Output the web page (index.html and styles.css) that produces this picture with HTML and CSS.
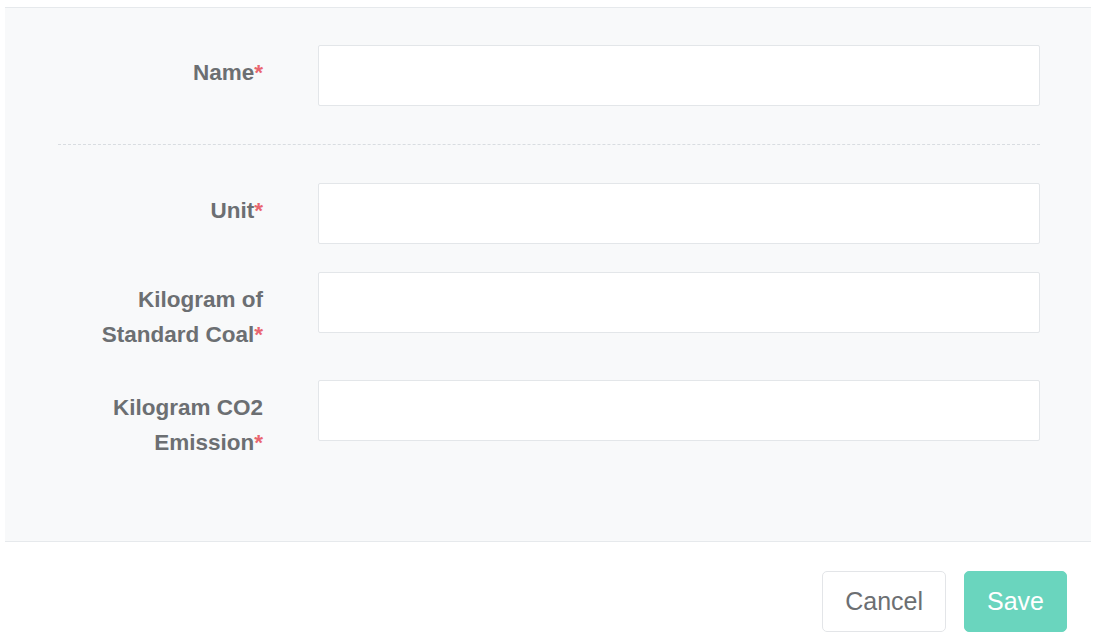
FILE: index.html
```html
<!DOCTYPE html>
<html lang="en">
<head>
<meta charset="utf-8">
<title>Energy item form</title>
<link rel="stylesheet" href="styles.css">
</head>
<body>
<div class="panel">
  <form class="form">
    <div class="row">
      <label class="label">Name<span class="req">*</span></label>
      <input class="input" type="text">
    </div>
    <div class="divider"></div>
    <div class="row">
      <label class="label">Unit<span class="req">*</span></label>
      <input class="input" type="text">
    </div>
    <div class="row">
      <label class="label">Kilogram of<br>Standard Coal<span class="req">*</span></label>
      <input class="input" type="text">
    </div>
    <div class="row">
      <label class="label">Kilogram CO2<br>Emission<span class="req">*</span></label>
      <input class="input" type="text">
    </div>
  </form>
</div>
<div class="footer">
  <button class="btn btn-cancel" type="button">Cancel</button>
  <button class="btn btn-save" type="button">Save</button>
</div>
</body>
</html>
```

FILE: styles.css
```css
html, body {
  margin: 0;
  padding: 0;
  background: #ffffff;
  font-family: "Liberation Sans", Arial, sans-serif;
}

.panel {
  margin: 7px 3px 0 5px;
  background: #f8f9fa;
  border-top: 1px solid #e6e9ec;
  border-bottom: 1px solid #e6e9ec;
  height: 533px;
  box-sizing: content-box;
}

.form {
  padding: 37px 51px 0 53px;
  display: flex;
  flex-direction: column;
  gap: 28px;
}

.row {
  display: flex;
  align-items: flex-start;
  gap: 55px;
}

.label {
  width: 205px;
  flex: none;
  text-align: right;
  font-weight: bold;
  font-size: 22.5px;
  line-height: 35px;
  padding-top: 10px;
  color: #6c6f72;
}

.req {
  color: #e9656f;
}

.input {
  flex: 1;
  height: 61px;
  box-sizing: border-box;
  border: 1px solid #e3e6e9;
  border-radius: 2px;
  background: #ffffff;
  margin: 0;
  padding: 0 16px;
  font-size: 22px;
  outline: none;
}

.divider {
  border-top: 1px dashed #d9dde1;
  margin: 10px 0;
}

.footer {
  display: flex;
  justify-content: flex-end;
  gap: 18px;
  padding: 29px 27px 0 0;
}

.btn {
  height: 61px;
  box-sizing: border-box;
  border-radius: 5px;
  font-family: "Liberation Sans", Arial, sans-serif;
  font-size: 25px;
  padding: 0 22px;
  cursor: pointer;
}

.btn-cancel {
  background: #ffffff;
  border: 1px solid #e3e5e8;
  color: #6c6f72;
}

.btn-save {
  background: #6ad5be;
  border: 1px solid #6ad5be;
  color: #ffffff;
}
```
